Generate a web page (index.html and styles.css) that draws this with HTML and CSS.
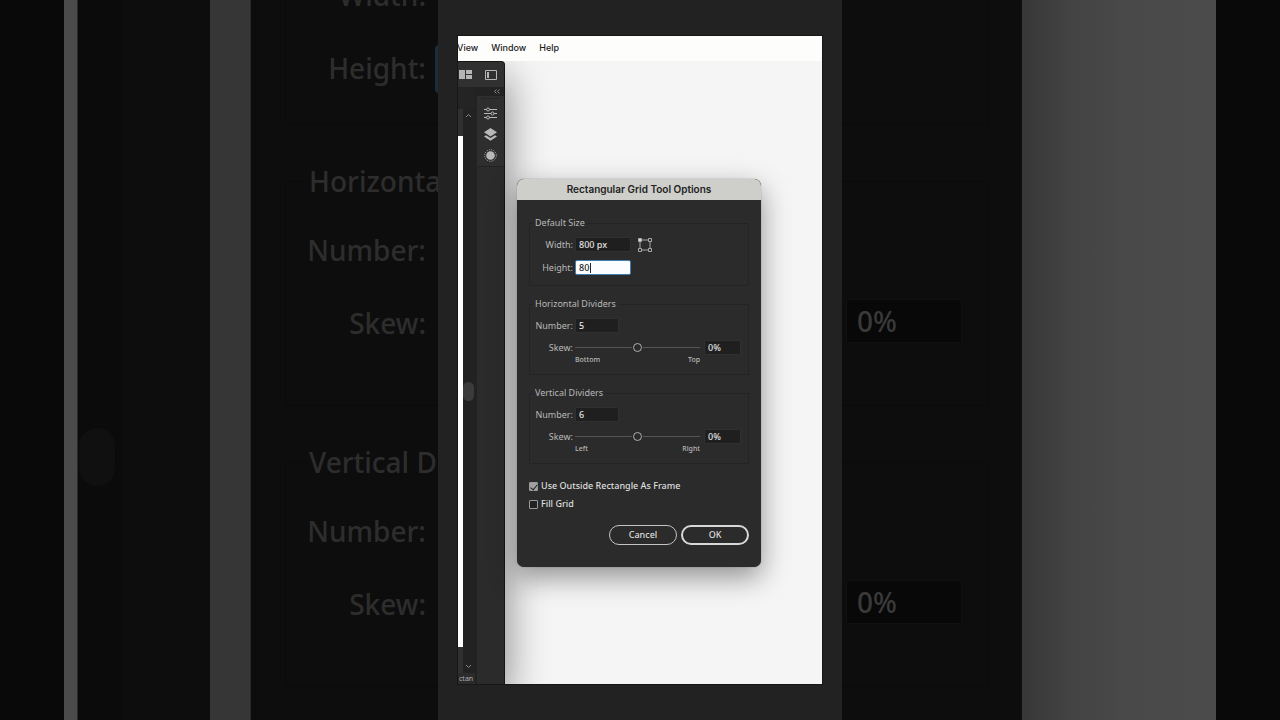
FILE: index.html
```html
<!doctype html>
<html lang="en">

<head>
    <meta charset="UTF-8">
    <meta name="viewport" content="width=device-width, initial-scale=1.0">
    <title>Rectangular Grid Tool Options</title>
    <link rel="stylesheet" href="styles.css">
</head>

<body>
    <!-- enlarged backdrop, left side -->
    <div class="backdrop" aria-hidden="true">
        <div class="strip strip--edge"></div>
        <div class="strip strip--page"></div>
        <div class="strip strip--scroll">
            <div class="strip--thumb"></div>
        </div>
        <div class="strip strip--dock"></div>
        <div class="strip strip--shade"></div>
        <div class="zoomed zoomed--left">
            <div class="zoomed--group zoomed--first">
                <div class="zoomed--row"><span class="zoomed--label">Width:</span></div>
                <div class="zoomed--row"><span class="zoomed--label">Height:</span><input class="zoomed--input zoomed--focus" aria-label="Height" disabled></div>
            </div>
            <fieldset class="zoomed--group">
                <legend>Horizontal Dividers</legend>
                <div class="zoomed--row"><span class="zoomed--label">Number:</span></div>
                <div class="zoomed--row"><span class="zoomed--label">Skew:</span></div>
            </fieldset>
            <fieldset class="zoomed--group">
                <legend>Vertical Dividers</legend>
                <div class="zoomed--row"><span class="zoomed--label">Number:</span></div>
                <div class="zoomed--row"><span class="zoomed--label">Skew:</span></div>
            </fieldset>
        </div>
    </div>

    <main class="frame">
        <div class="screen">
            <nav class="menubar">
                <a href="#">View</a>
                <a href="#">Window</a>
                <a href="#">Help</a>
            </nav>

            <div class="workspace">
                <div class="app">
                    <div class="app--toolbar">
                        <svg width="13" height="9" viewBox="0 0 13 9" fill="#b5b5b5">
                            <path d="M0 0h6v9H0zM7 0h6v4H7zM7 5h6v4H7z" />
                        </svg>
                        <svg width="12" height="10" viewBox="0 0 12 10">
                            <path d="M.5.5h11v9H.5z" fill="none" stroke="#b5b5b5" />
                            <path d="M2 2h2v6H2z" fill="#b5b5b5" />
                        </svg>
                    </div>
                    <div class="app--body">
                        <div class="document">
                            <div class="document--main">
                                <div class="document--page"></div>
                                <div class="scrollbar">
                                    <svg width="7" height="5" viewBox="0 0 7 5" fill="none" stroke="#8a8a8a">
                                        <path d="M1 4l2.500-2.500L6 4" />
                                    </svg>
                                    <div class="scrollbar--thumb"></div>
                                    <svg width="7" height="5" viewBox="0 0 7 5" fill="none" stroke="#8a8a8a">
                                        <path d="M1 1l2.500 2.500L6 1" />
                                    </svg>
                                </div>
                            </div>
                            <div class="document--status">ctan</div>
                        </div>
                        <div class="dock">
                            <div class="dock--header">
                                <svg width="6" height="5" viewBox="0 0 6 5" fill="none" stroke="#a0a0a0" stroke-width=".8">
                                    <path d="M2.500.5l-2 2 2 2M5.500.5l-2 2 2 2" />
                                </svg>
                            </div>
                            <div class="dock--icons">
                                <div class="dock--grip"></div>
                                <svg width="13" height="13" viewBox="0 0 13 13" fill="#2e2e2e" stroke="#b8b8b8">
                                    <path d="M0 2.500h13M0 6.500h13M0 10.500h13" />
                                    <circle cx="4" cy="2.500" r="1.500" />
                                    <circle cx="8.500" cy="6.500" r="1.500" />
                                    <circle cx="4" cy="10.500" r="1.500" />
                                </svg>
                                <svg width="13" height="13" viewBox="0 0 13 13" fill="#b8b8b8">
                                    <path d="M6.500 0l6.500 4.200-6.500 4.200L0 4.200z" />
                                    <path d="M2 7.200l4.500 2.900L11 7.200l2 1.300-6.500 4.200L0 8.500z" />
                                </svg>
                                <svg width="13" height="13" viewBox="0 0 13 13">
                                    <circle cx="6.500" cy="6.500" r="4.300" fill="#b8b8b8" />
                                    <circle cx="6.500" cy="6.500" r="5.800" fill="none" stroke="#b8b8b8" stroke-dasharray="1 1.280" />
                                </svg>
                            </div>
                        </div>
                    </div>
                </div>

                <form class="dialog">
                    <h1 class="dialog--title">Rectangular Grid Tool Options</h1>
                    <div class="dialog--body">
                        <fieldset class="group">
                            <legend>Default Size</legend>
                            <div class="row">
                                <label for="width">Width:</label>
                                <input class="field" id="width" type="text" value="800 px">
                                <svg class="origin" width="14" height="14" viewBox="0 0 14 14" fill="#2b2b2b" stroke="#a8a8a8">
                                    <path d="M2 2h10v10H2z" />
                                    <path d="M.5.5h3v3h-3z" fill="#d8d8d8" />
                                    <path d="M10.500.5h3v3h-3zM.5 10.500h3v3h-3zM10.500 10.500h3v3h-3z" />
                                </svg>
                            </div>
                            <div class="row">
                                <label for="height">Height:</label>
                                <div class="editing">
                                    <input class="field field--active" id="height" type="text" value="80">
                                </div>
                            </div>
                        </fieldset>

                        <fieldset class="group">
                            <legend>Horizontal Dividers</legend>
                            <div class="row">
                                <label for="rows">Number:</label>
                                <input class="field field--number" id="rows" type="text" value="5">
                            </div>
                            <div class="row row--skew">
                                <label for="rowSkew">Skew:</label>
                                <input class="slider" id="rowSkew" type="range" min="-100" max="100" value="0">
                                <input class="field field--percent" type="text" value="0%" aria-label="Horizontal skew">
                            </div>
                            <div class="scale"><span>Bottom</span><span>Top</span></div>
                        </fieldset>

                        <fieldset class="group">
                            <legend>Vertical Dividers</legend>
                            <div class="row">
                                <label for="columns">Number:</label>
                                <input class="field field--number" id="columns" type="text" value="6">
                            </div>
                            <div class="row row--skew">
                                <label for="columnSkew">Skew:</label>
                                <input class="slider" id="columnSkew" type="range" min="-100" max="100" value="0">
                                <input class="field field--percent" type="text" value="0%" aria-label="Vertical skew">
                            </div>
                            <div class="scale"><span>Left</span><span>Right</span></div>
                        </fieldset>

                        <div class="checks">
                            <label class="check"><input type="checkbox" checked>Use Outside Rectangle As Frame</label>
                            <label class="check"><input type="checkbox">Fill Grid</label>
                        </div>

                        <div class="buttons">
                            <button class="button" type="button">Cancel</button>
                            <button class="button button--default" type="button">OK</button>
                        </div>
                    </div>
                </form>
            </div>
        </div>
    </main>

    <!-- enlarged backdrop, right side -->
    <div class="backdrop backdrop--right" aria-hidden="true">
        <div class="zoomed zoomed--right">
            <div class="zoomed--group zoomed--first">
                <div class="zoomed--row"></div>
                <div class="zoomed--row"></div>
            </div>
            <div class="zoomed--group zoomed--values">
                <div class="zoomed--row"></div>
                <div class="zoomed--row"><input class="zoomed--input" value="0%" aria-label="Skew" disabled></div>
            </div>
            <div class="zoomed--group zoomed--values">
                <div class="zoomed--row"></div>
                <div class="zoomed--row"><input class="zoomed--input" value="0%" aria-label="Skew" disabled></div>
            </div>
        </div>
        <div class="strip strip--fade"></div>
        <div class="strip strip--edge"></div>
    </div>
</body>

</html>
```

FILE: styles.css
```css
* {
    box-sizing: border-box;
}

body {
    margin: 0;
    height: 100vh;
    display: flex;
    overflow: hidden;
    background: #0a0a0a;
    font-family: "Noto Sans", sans-serif;
    font-size: 9px;
    line-height: 12px;
}

fieldset,
legend {
    margin: 0;
    padding: 0;
    min-width: 0;
}

svg {
    display: block;
    flex: none;
}

/* backdrop */
.backdrop {
    flex: 1;
    display: flex;
    justify-content: flex-end;
    min-width: 0;
    overflow: hidden;
}

.backdrop--right {
    justify-content: flex-start;
}

.strip {
    flex: none;
}

.strip--edge {
    width: 64px;
    background: #090909;
}

.strip--page {
    width: 14px;
    background: #4b4b4b;
    border-right: 1px solid #2a2a2a;
}

.strip--scroll {
    width: 39px;
    background: #0b0b0b;
    border-right: 1px solid #0a0a0a;
    display: flex;
    align-items: center;
}

.strip--thumb {
    width: 36px;
    height: 58px;
    margin-top: 194px;
    margin-left: 1px;
    border-radius: 18px;
    background: #101010;
}

.strip--dock {
    width: 93px;
    background: #0d0d0d;
    border-left: 4px solid #0b0b0b;
}

.strip--shade {
    width: 41px;
    background: #363636;
    border-right: 1px solid #2a2a2a;
}

.strip--fade {
    flex: 1;
    background: linear-gradient(90deg, #373737 0%, #434343 25%, #494949 55%, #4b4b4b 100%);
}

.zoomed {
    flex: none;
    margin-top: -41px;
    background: #0d0d0d;
    color: #2d2d2d;
    font-size: 28px;
    font-weight: 500;
    line-height: 37px;
    overflow: hidden;
}

.zoomed--left {
    width: 187px;
    padding-left: 34px;
}

.zoomed--right {
    width: 180px;
    padding-right: 34px;
}

.zoomed--group {
    height: 243px;
    margin-bottom: 38px;
    padding-top: 14px;
    border: 1px solid #0a0a0a;
    border-right: none;
}

.zoomed--group legend {
    margin-left: 23px;
    white-space: nowrap;
}

.zoomed--first {
    height: 166px;
    padding-top: 0;
    border-top: none;
}

.zoomed--right .zoomed--group {
    border-right: 1px solid #0a0a0a;
    border-left: none;
}

.zoomed--right .zoomed--first {
    margin-bottom: 56px;
}

.zoomed--values {
    height: 225px;
    margin-bottom: 56px;
    padding-top: 29px;
}

.zoomed--row {
    height: 73px;
    display: flex;
    align-items: center;
    gap: 9px;
}

.zoomed--label {
    flex: none;
    width: 140px;
    text-align: right;
}

.zoomed--input {
    flex: none;
    width: 116px;
    height: 44px;
    margin-left: 4px;
    padding: 0 10px;
    border: 1px solid #101010;
    background: #080808;
    color: #3a3a3a;
    font: inherit;
}

.zoomed--focus {
    width: 174px;
    height: 48px;
    margin-left: 0;
    border: 3px solid #1b2d3c;
    border-radius: 4px;
}

/* centre column */
.frame {
    flex: none;
    width: 404px;
    padding: 36px 20px;
    background: #222222;
}

.screen {
    height: 100%;
    display: flex;
    flex-direction: column;
    overflow: hidden;
    outline: 1px solid #161616;
    background: #f5f5f5;
}

.menubar {
    flex: none;
    height: 25px;
    display: flex;
    align-items: center;
    gap: 13px;
    margin-left: -1px;
    padding-bottom: 1px;
    background: #fdfdfc;
    font-family: Inter, sans-serif;
    font-size: 9px;
    font-weight: 500;
}

.menubar a {
    color: #1c1c1c;
    text-decoration: none;
}

.workspace {
    flex: 1;
    min-height: 0;
    position: relative;
    display: flex;
    overflow: hidden;
}

.app {
    width: 47px;
    display: flex;
    flex-direction: column;
    background: #2b2b2b;
    border-top: 1px solid #151515;
    border-right: 1px solid #151515;
    border-top-right-radius: 4px;
    box-shadow: 2px 16px 40px rgba(0, 0, 0, 0.45);
}

.app--toolbar {
    flex: none;
    height: 25px;
    display: flex;
    align-items: center;
    gap: 13px;
    padding-left: 1px;
    background: #303030;
    border-top-right-radius: 3px;
}

.app--body {
    flex: 1;
    min-height: 0;
    display: flex;
}

.document {
    width: 17px;
    display: flex;
    flex-direction: column;
    padding-top: 22px;
    background: #242424;
}

.document--main {
    flex: 1;
    display: flex;
}

.document--page {
    width: 5px;
    background: #ffffff;
    border-top: 27px solid #303030;
    border-bottom: 26px solid #303030;
}

.scrollbar {
    flex: 1;
    display: flex;
    flex-direction: column;
    align-items: center;
    justify-content: space-between;
    padding: 4px 1px 4px 0;
    background: #222222;
}

.scrollbar--thumb {
    width: 11px;
    height: 19px;
    border-radius: 6px;
    background: #3b3b3b;
}

.document--status {
    height: 11px;
    padding-left: 1px;
    background: #2b2b2b;
    color: #b0b0b0;
    font-size: 7px;
    line-height: 12px;
}

.dock {
    flex: 1;
    border-left: 2px solid #222222;
}

.dock--header {
    height: 9px;
    display: flex;
    align-items: center;
    justify-content: flex-end;
    padding-right: 4px;
    background: #222222;
}

.dock--icons {
    height: 71px;
    display: flex;
    flex-direction: column;
    align-items: center;
    gap: 8px;
    padding-top: 2px;
    background: #2e2e2e;
    border-bottom: 1px solid #222222;
}

.dock--grip {
    width: 17px;
    height: 1px;
    border-top: 1px dotted #1c1c1c;
}

/* dialog window */
.dialog {
    position: absolute;
    left: 59px;
    top: 118px;
    width: 244px;
    border-radius: 7px;
    overflow: hidden;
    background: #2b2b2b;
    color: #b9b9b9;
    box-shadow: 0 0 1px #555555, 0 10px 28px rgba(0, 0, 0, 0.42);
}

.dialog--title {
    margin: 0;
    height: 21px;
    background: #cecfca;
    color: #222222;
    font-family: Inter, sans-serif;
    font-size: 10px;
    font-weight: 600;
    line-height: 21px;
    text-align: center;
}

.dialog--body {
    display: flex;
    flex-direction: column;
    gap: 12px;
    padding: 17px 12px 22px;
}

.group {
    padding: 4px 0 6px;
    border: 1px solid #242424;
}

.group legend {
    margin-left: 3px;
    padding: 0 2px;
}

.row {
    height: 23px;
    display: flex;
    align-items: center;
}

.row label {
    width: 43px;
    margin-right: 2px;
    text-align: right;
}

.field {
    width: 56px;
    height: 15px;
    padding: 0 3px;
    border: 1px solid #303030;
    border-radius: 1px;
    outline: none;
    background: #1f1f1f;
    color: #e2e2e2;
    font: inherit;
    font-weight: 500;
}

.field--number {
    width: 44px;
}

.field--percent {
    width: 37px;
    margin-left: 4px;
}

.field--active {
    display: block;
    border-color: #3d7fb5;
    border-radius: 2px;
    background: #fbfdfe;
    color: #222222;
}

.editing {
    position: relative;
}

/* text cursor */
.editing::after {
    content: "";
    position: absolute;
    left: 15px;
    top: 3px;
    width: 1px;
    height: 10px;
    background: #222222;
}

.origin {
    margin-left: 7px;
}

.row--skew {
    height: 15px;
    margin-top: 3px;
}

.slider {
    appearance: none;
    width: 125px;
    height: 10px;
    margin: 0;
    background: linear-gradient(#555555, #555555) center / 100% 1px no-repeat;
}

.slider::-webkit-slider-thumb {
    appearance: none;
    width: 9px;
    height: 9px;
    border: 1px solid #b0b0b0;
    border-radius: 50%;
    background: #2b2b2b;
    box-shadow: 0 0 0 1px #2b2b2b;
}

.scale {
    width: 125px;
    margin-left: 45px;
    margin-bottom: 3px;
    display: flex;
    justify-content: space-between;
    font-size: 7px;
    font-weight: 500;
    line-height: 10px;
}

.checks {
    padding-top: 1px;
    color: #dedede;
    font-weight: 500;
}

.check {
    height: 18px;
    display: flex;
    align-items: center;
    gap: 3px;
}

.check input {
    appearance: none;
    width: 9px;
    height: 9px;
    margin: 0;
    border: 1px solid #9a9a9a;
    border-radius: 1px;
    background: #222222;
}

.check input:checked {
    display: flex;
    justify-content: center;
    background: #a0a0a0;
}

.check input:checked::after {
    content: "";
    width: 3px;
    height: 6px;
    border: solid #222222;
    border-width: 0 1px 1px 0;
    transform: rotate(40deg);
}

.buttons {
    display: flex;
    justify-content: flex-end;
    gap: 4px;
}

.button {
    width: 68px;
    height: 20px;
    padding: 0;
    border: 1px solid #c4c4c4;
    border-radius: 10px;
    background: #2b2b2b;
    color: #dedede;
    font: inherit;
    font-weight: 500;
}

.button--default {
    border: 2px solid #d8d8d8;
}
```
